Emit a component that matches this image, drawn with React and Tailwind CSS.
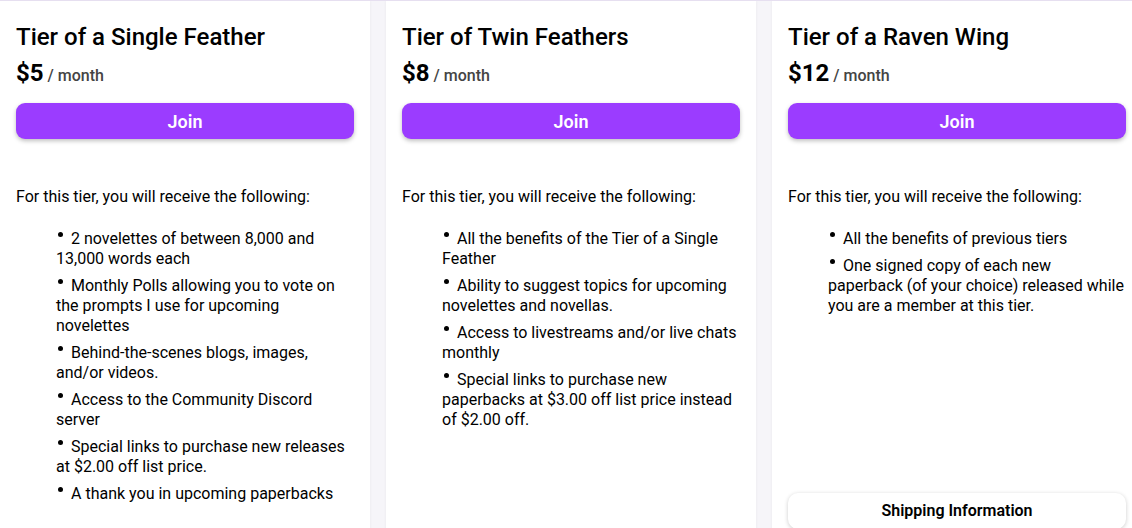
import React from "react";

const tiers = [
  {
    title: "Tier of a Single Feather",
    price: "$5",
    items: [
      "2 novelettes of between 8,000 and 13,000 words each",
      "Monthly Polls allowing you to vote on the prompts I use for upcoming novelettes",
      "Behind-the-scenes blogs, images, and/or videos.",
      "Access to the Community Discord server",
      "Special links to purchase new releases at $2.00 off list price.",
      "A thank you in upcoming paperbacks",
    ],
  },
  {
    title: "Tier of Twin Feathers",
    price: "$8",
    items: [
      "All the benefits of the Tier of a Single Feather",
      "Ability to suggest topics for upcoming novelettes and novellas.",
      "Access to livestreams and/or live chats monthly",
      "Special links to purchase new paperbacks at $3.00 off list price instead of $2.00 off.",
    ],
  },
  {
    title: "Tier of a Raven Wing",
    price: "$12",
    items: [
      "All the benefits of previous tiers",
      "One signed copy of each new paperback (of your choice) released while you are a member at this tier.",
    ],
    shipping: true,
  },
];

function Card({ tier }) {
  return (
    <div className="w-[370px] shrink-0 bg-white flex flex-col px-4 pt-[20px] pb-[15px] shadow-[0_0_3px_rgba(0,0,0,0.06)]">
      <h2 className="text-[24px] leading-[32px] text-black font-medium">{tier.title}</h2>
      <div className="mt-[5px] flex items-baseline">
        <span className="text-[24px] leading-[30px] font-bold text-black">{tier.price}</span>
        <span className="ml-[4px] text-[16px] text-[#444] font-medium">/ month</span>
      </div>
      <button className="mt-[15px] h-[36px] w-full rounded-[9px] bg-[#9b3cff] text-white text-[18px] font-semibold shadow-[0_2px_4px_rgba(0,0,0,0.25)]">
        Join
      </button>
      <p className="mt-[48px] text-[16px] leading-[20px] text-black">
        For this tier, you will receive the following:
      </p>
      <ul className="mt-[22px] pl-[40px] flex flex-col gap-[7px]">
        {tier.items.map((it) => (
          <li key={it} className="text-[16px] leading-[20px] text-black">
            <span className="inline-block w-[5px] h-[5px] rounded-full bg-black ml-[2px] mr-[8px] align-middle relative top-[-5px]"></span>
            {it}
          </li>
        ))}
      </ul>
      {tier.shipping && (
        <button className="mt-auto h-[36px] w-full rounded-[10px] bg-white text-black text-[16px] font-semibold shadow-[0_1px_4px_rgba(0,0,0,0.2)]">
          Shipping Information
        </button>
      )}
    </div>
  );
}

export default function App() {
  return (
    <div
      className="w-[1132px] h-[528px] overflow-hidden bg-[#f6f5f9] border-t border-[#e6dff0]"
      style={{ fontFamily: "Roboto, 'Noto Sans', sans-serif" }}
    >
      <div className="flex gap-4 h-[543px]">
        {tiers.map((t) => (
          <Card key={t.title} tier={t} />
        ))}
      </div>
    </div>
  );
}
